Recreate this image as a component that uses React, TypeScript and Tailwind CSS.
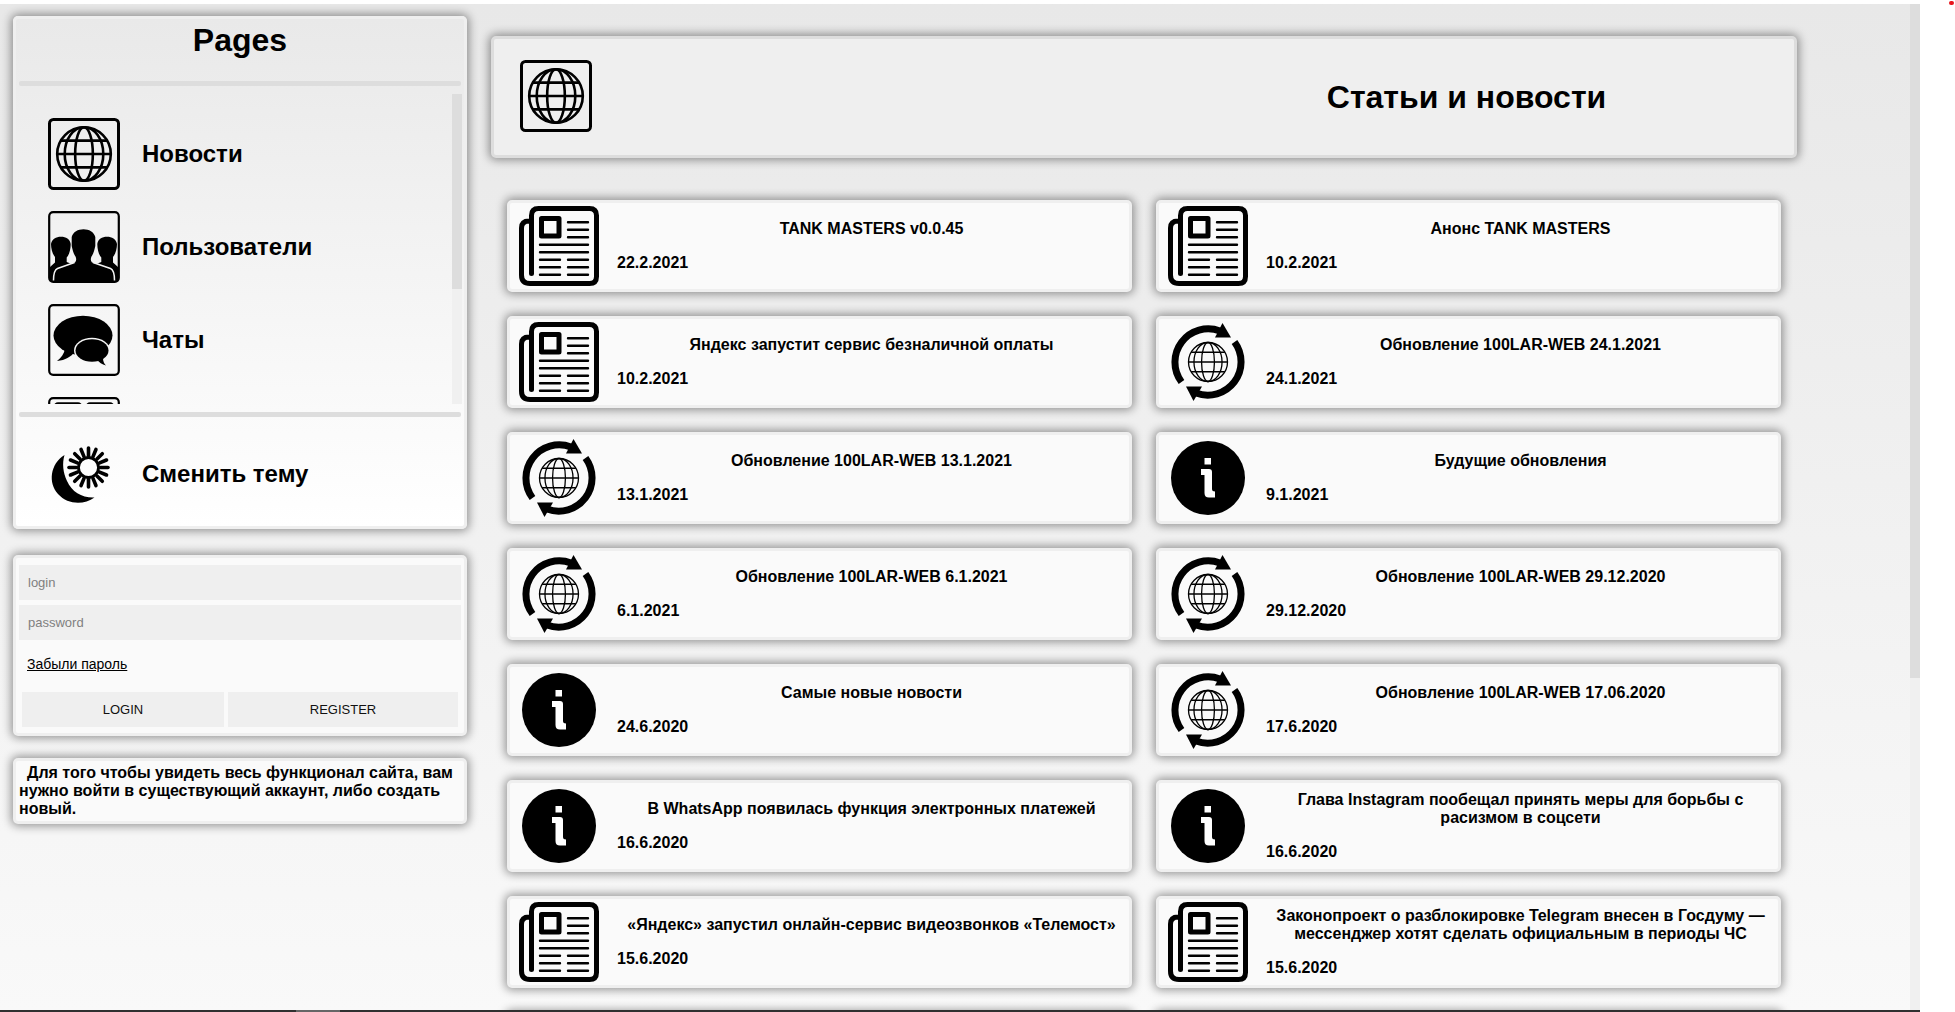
import React from "react";

const panel =
  "rounded-[5px] border-[3px] border-[#efefef] shadow-[0_0_10px_2px_rgba(0,0,0,0.4)]";

function Globe({ cx, cy, r, w }: { cx: number; cy: number; r: number; w: number }) {
  const h = r * 0.5;
  const x = r * 0.866;
  return (
    <g fill="none" stroke="#000" strokeWidth={w}>
      <circle cx={cx} cy={cy} r={r} />
      <ellipse cx={cx} cy={cy} rx={r * 0.33} ry={r} />
      <ellipse cx={cx} cy={cy} rx={r * 0.72} ry={r} />
      <path d={`M${cx - r} ${cy}H${cx + r}M${cx - x} ${cy - h}H${cx + x}M${cx - x} ${cy + h}H${cx + x}`} />
    </g>
  );
}

function GlobeBox() {
  return (
    <svg viewBox="0 0 72 72" className="size-[72px] shrink-0" aria-hidden="true">
      <rect x="1.5" y="1.5" width="69" height="69" rx="4" fill="none" stroke="#000" strokeWidth="3" />
      <Globe cx={36} cy={36} r={26.8} w={2.6} />
    </svg>
  );
}

function UsersBox() {
  return (
    <svg viewBox="0 0 72 72" className="size-[72px] shrink-0" aria-hidden="true">
      <rect x="1.200" y="1.200" width="69.600" height="69.600" rx="4" fill="none" stroke="#000" strokeWidth="2.200" />
      <path d="M2 70V56L7 51.500V46C4.500 43 3 38 3 33C4 28 8 25.700 13 25.700C18 25.700 22 28 22.700 33C22.700 39 21 44 18.700 46.500V51L25 53.500H47L53.300 51V46.500C51 44 49.300 39 49.300 33C50 28 54 25.700 59 25.700C64 25.700 68 28 69 33C69 38 67.500 43 65 46V51.500L70 56V70Z" />
      <path d="M5 69.500C5 63 5.500 58.500 9 57L27 51.500C28.500 50 28.500 48 27.500 45.500C25.500 43 24.500 38.500 23.700 35V26C25 21 30 18.300 35.500 18.300C41 18.300 46 21 47.300 26V35C46.500 38.500 45.500 43 43.500 45.500C42.500 48 42.500 50 44 51.500L62 57C66.500 58.500 67 63 67 69.500Z" />
      <path d="M5.500 69.500C5.500 63 6 59 9.500 57.500L26.500 51.500M66.500 69.500C66.500 63 66 59 62.500 57.500L45 51.500" fill="none" stroke="#f3f3f3" strokeWidth="1.500" />
    </svg>
  );
}

function ChatBox() {
  return (
    <svg viewBox="0 0 72 72" className="size-[72px] shrink-0" aria-hidden="true">
      <rect x="1.200" y="1.200" width="69.600" height="69.600" rx="4" fill="none" stroke="#000" strokeWidth="2.200" />
      <ellipse cx="35" cy="31.500" rx="29.500" ry="19.800" />
      <path d="M17 45C16 50 13 54 9 57C18 56 22 53 27 48Z" />
      <ellipse cx="44" cy="46.500" rx="18" ry="12.800" fill="#f7f7f7" />
      <ellipse cx="44" cy="46.500" rx="16.500" ry="11.300" />
      <path d="M49 56C51 58 54 60.500 58 61.500C56 59.500 55 57 55 54Z" />
    </svg>
  );
}

function GridBox() {
  return (
    <svg viewBox="0 0 72 72" className="size-[72px] shrink-0" aria-hidden="true">
      <rect x="1.200" y="1.200" width="69.600" height="69.600" rx="4" fill="none" stroke="#000" strokeWidth="2.200" />
      <g fill="none" stroke="#000" strokeWidth="2.500">
        <rect x="7" y="6.500" width="26" height="26" rx="3" />
        <rect x="39" y="6.500" width="26" height="26" rx="3" />
        <rect x="7" y="39" width="26" height="26" rx="3" />
        <rect x="39" y="39" width="26" height="26" rx="3" />
      </g>
    </svg>
  );
}

function ThemeIcon() {
  return (
    <svg viewBox="0 0 72 72" className="size-[72px] shrink-0" aria-hidden="true">
      <path d="M16.500 17C2 26 0 45 10 56C20 67 36 67 46.500 59.500C34 60 24 54 19 43C15 34 14 26 16.500 17Z" />
      <circle cx="40.500" cy="29.500" r="10" fill="none" stroke="#000" strokeWidth="2.800" />
      <g stroke="#000" strokeWidth="3.600" strokeLinecap="round">
        {Array.from({ length: 16 }, (_, i) => (
          <path key={i} d="M40.500 10V17.500" transform={`rotate(${i * 22.5} 40.500 29.500)`} />
        ))}
      </g>
    </svg>
  );
}

function PaperIcon() {
  return (
    <svg viewBox="0 0 80 80" className="size-20 shrink-0" fill="none" stroke="#000" aria-hidden="true">
      <path d="M12.500 67.500V9.500Q12.500 2.500 19.500 2.500H70.500Q77.500 2.500 77.500 9.500V70.500Q77.500 77.500 70.500 77.500H11Q2.500 77.500 2.500 69V22Q2.500 15 10 15H12" strokeWidth="5" strokeLinecap="round" />
      <rect x="22.500" y="12.500" width="17.500" height="17.500" strokeWidth="5" strokeLinejoin="round" />
      <path d="M49 16.200H69M49 23.700H69M49 31.200H69M21 38.700H69M21 46.200H69M21 53.700H41M49 53.700H69M21 61.200H41M49 61.200H69M21 68.700H41M49 68.700H69" strokeWidth="2.400" strokeLinecap="round" />
    </svg>
  );
}

function UpdateIcon() {
  return (
    <svg viewBox="0 0 80 80" className="size-20 shrink-0" aria-hidden="true">
      <Globe cx={40} cy={40} r={19.5} w={1.3} />
      <path d="M13.500 60A33.300 33.300 0 0 1 52 9" fill="none" stroke="#000" strokeWidth="7" />
      <path d="M54.500 1L63 15.500H47Z" />
      <path d="M66.500 20A33.300 33.300 0 0 1 28 71" fill="none" stroke="#000" strokeWidth="7" />
      <path d="M25.500 79L18 64.500H34Z" />
    </svg>
  );
}

function InfoIcon() {
  return (
    <svg viewBox="0 0 80 80" className="size-20 shrink-0" aria-hidden="true">
      <circle cx="40" cy="40" r="37" />
      <path d="M36.500 20H43V26.500H36.500ZM33 31H41Q44 31 44 34V51Q44 53.500 47 53.500V59.500H41Q36.500 59.500 36.500 55V37H33Z" fill="#fff" />
    </svg>
  );
}

const icons = { paper: PaperIcon, update: UpdateIcon, info: InfoIcon };

const articles: { icon: keyof typeof icons; title: string; date: string }[] = [
  { icon: "paper", title: "TANK MASTERS v0.0.45", date: "22.2.2021" },
  { icon: "paper", title: "Анонс TANK MASTERS", date: "10.2.2021" },
  { icon: "paper", title: "Яндекс запустит сервис безналичной оплаты", date: "10.2.2021" },
  { icon: "update", title: "Обновление 100LAR-WEB 24.1.2021", date: "24.1.2021" },
  { icon: "update", title: "Обновление 100LAR-WEB 13.1.2021", date: "13.1.2021" },
  { icon: "info", title: "Будущие обновления", date: "9.1.2021" },
  { icon: "update", title: "Обновление 100LAR-WEB 6.1.2021", date: "6.1.2021" },
  { icon: "update", title: "Обновление 100LAR-WEB 29.12.2020", date: "29.12.2020" },
  { icon: "info", title: "Самые новые новости", date: "24.6.2020" },
  { icon: "update", title: "Обновление 100LAR-WEB 17.06.2020", date: "17.6.2020" },
  { icon: "info", title: "В WhatsApp появилась функция электронных платежей", date: "16.6.2020" },
  { icon: "info", title: "Глава Instagram пообещал принять меры для борьбы с расизмом в соцсети", date: "16.6.2020" },
  { icon: "paper", title: "«Яндекс» запустил онлайн-сервис видеозвонков «Телемост»", date: "15.6.2020" },
  { icon: "paper", title: "Законопроект о разблокировке Telegram внесен в Госдуму — мессенджер хотят сделать официальным в периоды ЧС", date: "15.6.2020" },
];

const pages = [
  { label: "Новости", Icon: GlobeBox },
  { label: "Пользователи", Icon: UsersBox },
  { label: "Чаты", Icon: ChatBox },
  { label: "", Icon: GridBox },
];

function Divider() {
  return <div className="mx-[3px] h-[5px] shrink-0 rounded-[2px] bg-[#dddddd]" />;
}

function Sidebar() {
  return (
    <aside className="w-[454px] shrink-0">
      <section className={`${panel} bg-linear-to-b from-[#e9e9e9] to-white`}>
        <h1 className="flex h-[62px] justify-center text-[32px] leading-[42px] font-bold">Pages</h1>
        <Divider />
        <div className="mt-2 mr-[2px] mb-2 flex h-[310px]">
          <nav className="flex flex-1 flex-col gap-[21px] overflow-hidden pt-6 pl-8">
            {pages.map(({ label, Icon }) => (
              <a
                key={label}
                href="#page"
                aria-label={label || "Приложения"}
                className="flex shrink-0 items-center gap-[22px] text-2xl font-bold"
              >
                <Icon />
                {label}
              </a>
            ))}
          </nav>
          <div className="w-[10px] bg-[#f0f0f0]">
            <div className="h-[195px] bg-[#dddddd]" />
          </div>
        </div>
        <Divider />
        <button type="button" className="flex h-[109px] w-full items-center gap-[22px] pt-1 pl-8 text-2xl font-bold">
          <ThemeIcon />
          Сменить тему
        </button>
      </section>

      <form className={`${panel} mt-[26px] flex flex-col bg-[#fafafa] px-[3px] pt-[7px] pb-[6px]`}>
        <input
          aria-label="login"
          placeholder="login"
          className="h-[35px] bg-[#efefef] px-[9px] text-[13px] placeholder:text-[#808080]"
        />
        <input
          aria-label="password"
          type="password"
          placeholder="password"
          className="mt-[5px] h-[35px] bg-[#efefef] px-[9px] text-[13px] placeholder:text-[#808080]"
        />
        <a href="#forgot" className="mt-4 self-start pl-2 text-[14px] leading-4 underline">
          Забыли пароль
        </a>
        <div className="mt-5 flex gap-1 px-[3px] text-[13px] text-[#111]">
          <button type="button" className="h-[35px] flex-[202] bg-[#efefef]">LOGIN</button>
          <button type="button" className="h-[35px] flex-[230] bg-[#efefef]">REGISTER</button>
        </div>
      </form>

      <p className={`${panel} mt-[22px] bg-[#fafafa] p-[3px] indent-2 text-base leading-[18px] font-bold`}>
        Для того чтобы увидеть весь функционал сайта, вам нужно войти в существующий аккаунт, либо создать новый.
      </p>
    </aside>
  );
}

export default function App() {
  return (
    <div className="flex h-screen flex-col overflow-hidden bg-white pt-1 font-['Liberation_Sans',Arial,sans-serif] text-black">
      <div className="flex min-h-0 flex-1">
        <div className="flex min-w-0 flex-1 flex-col">
          <div className="flex min-h-0 flex-1 bg-linear-to-b from-[#e8e8e8] to-[#f9f9f9]">
            <div className="flex min-w-0 flex-1 items-start gap-6 overflow-hidden pt-3 pr-[113px] pl-[13px]">
              <Sidebar />
              <main className="min-w-0 flex-1 pt-5">
                <header className="flex h-[122px] items-center rounded-[5px] border-[3px] border-[#dddddd] bg-[#efefef] pr-3 pl-[26px] shadow-[0_0_10px_2px_rgba(0,0,0,0.4)]">
                  <div className="flex-1 pb-0.5">
                    <GlobeBox />
                  </div>
                  <h2 className="flex-1 text-center text-[32px] font-bold">Статьи и новости</h2>
                </header>
                <div className="mt-[42px] grid grid-cols-2 gap-6 px-4">
                  {articles.map((a, i) => {
                    const Icon = icons[a.icon];
                    return (
                      <a key={i} href="#article" className={`${panel} flex h-[92px] items-center gap-[18px] bg-[#fafafa] pr-[3px] pl-[9px]`}>
                        <Icon />
                        <span className="flex min-w-0 flex-1 flex-col gap-4 text-base leading-[18px] font-bold">
                          <span className="text-center">{a.title}</span>
                          <span>{a.date}</span>
                        </span>
                      </a>
                    );
                  })}
                  <div className={`${panel} h-[92px] bg-[#fafafa]`} />
                  <div className={`${panel} h-[92px] bg-[#fafafa]`} />
                </div>
              </main>
            </div>
            <div className="w-[10px] bg-[#f0f0f0]">
              <div className="h-[67%] bg-[#dddddd]" />
            </div>
          </div>
          <div className="h-[2px] bg-[#303030] pl-[296px]">
            <div className="h-full w-[44px] bg-[#666]" />
          </div>
        </div>
        <div className="flex w-[35px] justify-end pr-[1px]">
          <div className="-mt-[3px] h-1 w-[5px] rounded-full bg-[#e8141c]" />
        </div>
      </div>
    </div>
  );
}
